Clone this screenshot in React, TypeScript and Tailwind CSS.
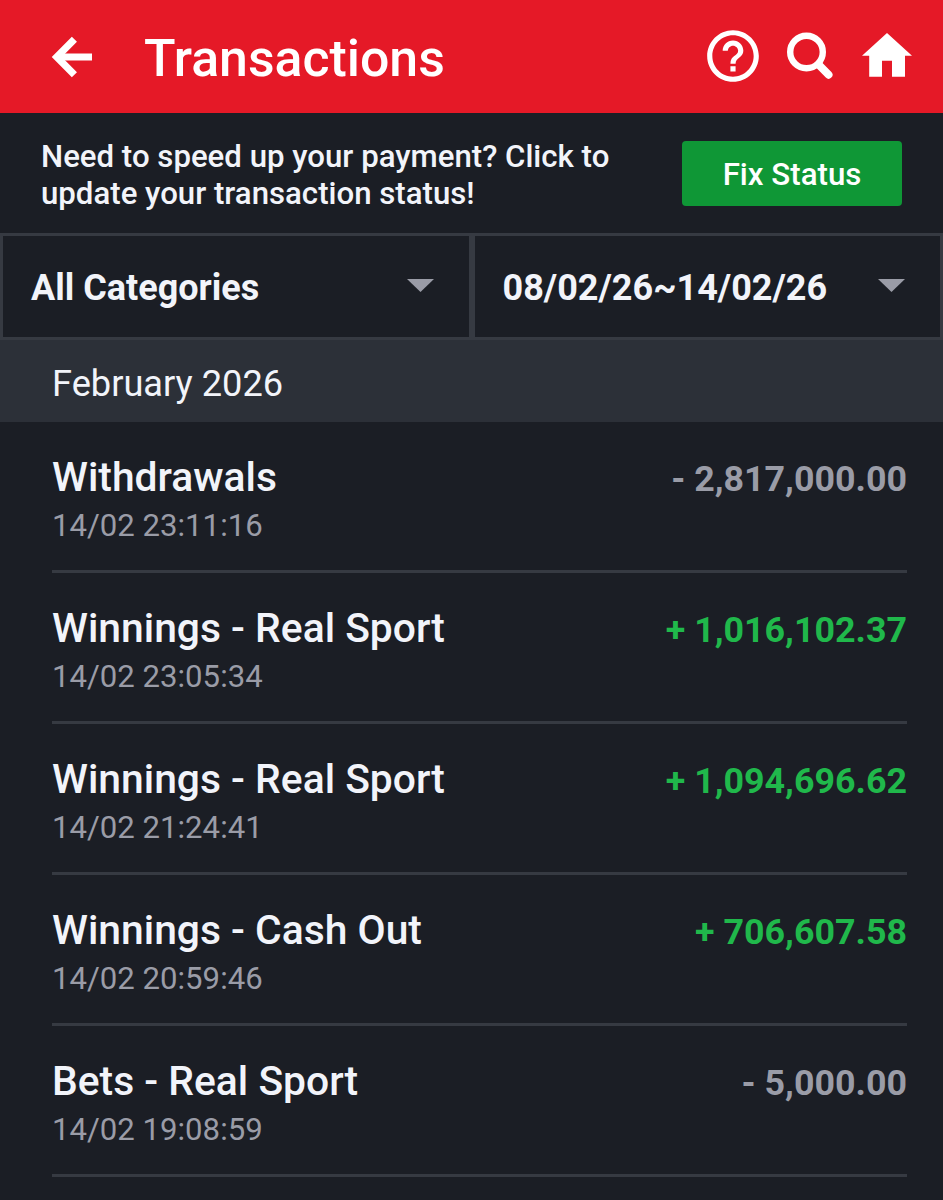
import React from "react";
import { MdHelpOutline } from "react-icons/md";

interface Transaction {
  title: string;
  date: string;
  amount: string;
  credit: boolean;
}

const transactions: Transaction[] = [
  { title: "Withdrawals", date: "14/02 23:11:16", amount: "- 2,817,000.00", credit: false },
  { title: "Winnings - Real Sport", date: "14/02 23:05:34", amount: "+ 1,016,102.37", credit: true },
  { title: "Winnings - Real Sport", date: "14/02 21:24:41", amount: "+ 1,094,696.62", credit: true },
  { title: "Winnings - Cash Out", date: "14/02 20:59:46", amount: "+ 706,607.58", credit: true },
  { title: "Bets - Real Sport", date: "14/02 19:08:59", amount: "- 5,000.00", credit: false },
];

const BackIcon = () => (
  <svg width="42" height="42" viewBox="0 0 42 42" fill="none" stroke="currentColor" strokeWidth="7.2">
    <path d="M41 21H7" />
    <path d="M23.4 3.2L5.8 21l17.6 17.8" />
  </svg>
);

const SearchIcon = () => (
  <svg width="48" height="48" viewBox="0 0 48 48" fill="none" stroke="currentColor">
    <circle cx="20.5" cy="20" r="16.3" strokeWidth="6.4" />
    <path d="M33 33l9.6 9.8" strokeWidth="7.8" strokeLinecap="round" />
  </svg>
);

const HomeIcon = () => (
  <svg width="50" height="44" viewBox="0 0 50 44" fill="currentColor">
    <path d="M25 0L50 22.7h-7V43.7H30V27.7H20V43.7H7.2V22.7H0z" />
  </svg>
);

const Header: React.FC = () => (
  <header className="flex h-[113px] items-center bg-[#e51927] text-white">
    <button className="ml-[51px] flex">
      <BackIcon />
    </button>
    <h1 className="ml-[51px] pt-[4px] text-[51.8px] leading-[60px] font-medium">Transactions</h1>
    <div className="ml-auto flex items-center pr-[31px] pb-[1px]">
      <MdHelpOutline size={62} />
      <div className="ml-[22px] flex">
        <SearchIcon />
      </div>
      <div className="mb-[2px] ml-[28px] flex">
        <HomeIcon />
      </div>
    </div>
  </header>
);

const PaymentBanner: React.FC = () => (
  <section className="flex h-[120px] items-center justify-between pr-[41px] pl-[41px]">
    <p className="mt-[3px] text-[31.2px] leading-[37px] font-medium">
      Need to speed up your payment? Click to
      <br />
      update your transaction status!
    </p>
    <button className="mt-[1px] h-[65px] w-[220px] rounded-[4px] bg-[#0f9736] pt-[3px] text-[31.25px] font-medium text-white">
      Fix Status
    </button>
  </section>
);

const FilterSelect: React.FC<{ label: string }> = ({ label }) => (
  <button className="flex flex-1 items-center justify-between border-3 border-[#363a42] pr-[35px] pl-[28px] text-[36px] font-bold">
    <span className="pt-[2px] leading-[42px]">{label}</span>
    <svg width="27" height="13" viewBox="0 0 27 13" className="mb-[2px] text-[#9a9ca7]">
      <path d="M0 0h27L13.5 13z" fill="currentColor" />
    </svg>
  </button>
);

const TransactionRow: React.FC<{ item: Transaction }> = ({ item }) => (
  <li className="flex h-[151px] items-start justify-between border-b-3 border-[#363a42] pt-[31px]">
    <div>
      <div className="text-[40.8px] leading-[48px] font-medium">{item.title}</div>
      <div className="text-[31.15px] leading-[49px] text-[#9a9ca7]">{item.date}</div>
    </div>
    <div
      className={
        item.credit
          ? "mt-[2px] text-[35.8px] leading-[49px] font-bold text-[#20b84b]"
          : "mt-[2px] text-[35.8px] leading-[49px] font-bold text-[#9a9ca7]"
      }
    >
      {item.amount}
    </div>
  </li>
);

const App: React.FC = () => {
  return (
    <div className="min-h-[1200px] w-full bg-[#1b1e25] font-[Roboto,sans-serif] text-[#f2f4fa]">
      <Header />
      <PaymentBanner />

      {/* Filters */}
      <div className="flex h-[107px]">
        <FilterSelect label="All Categories" />
        <FilterSelect label="08/02/26~14/02/26" />
      </div>

      <h2 className="h-[82px] bg-[#2c3038] pt-[3px] pl-[52px] text-[36.2px] leading-[82px]">February 2026</h2>

      <ul className="mr-[36px] ml-[52px]">
        {transactions.map((item) => (
          <TransactionRow key={item.date} item={item} />
        ))}
      </ul>
    </div>
  );
};

export default App;
